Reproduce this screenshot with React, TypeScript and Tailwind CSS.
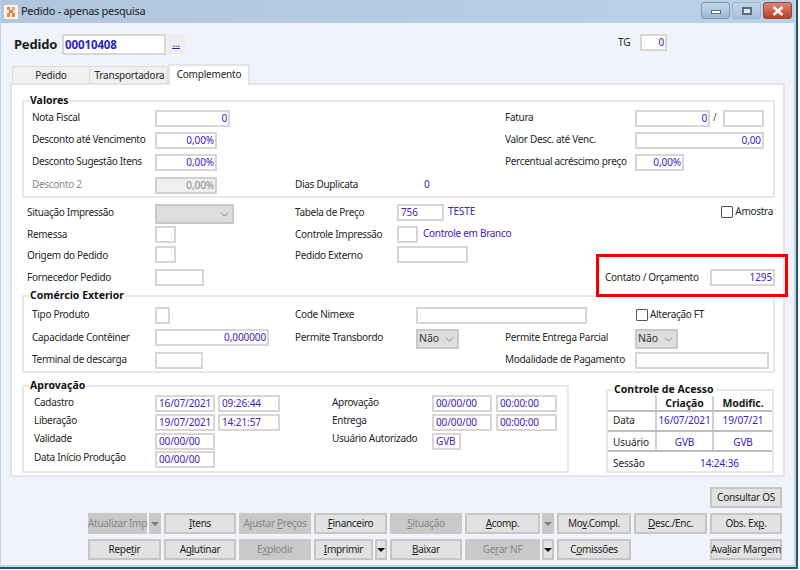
import type { ReactNode } from 'react';
import { ChevronDown } from 'lucide-react';

function Field({ w, children, disabled, left }: { w: string; children?: ReactNode; disabled?: boolean; left?: boolean }) {
  return (
    <div
      className={`${w} h-[17px] border-2 leading-[13px] whitespace-nowrap overflow-hidden ${left ? 'text-left pl-[2px]' : 'text-right pr-[1px]'} ${
        disabled ? 'bg-[#efefef] border-[#d0d0d0] text-[#888888]' : 'bg-white border-[#d6d6d6] text-[#3b22c4]'
      }`}
    >
      {children}
    </div>
  );
}

function Label({ children, disabled, className }: { children: ReactNode; disabled?: boolean; className?: string }) {
  return (
    <div className={`leading-[15px] tracking-[-0.3px] whitespace-nowrap ${disabled ? 'text-[#8a8a8a]' : 'text-[#262626]'} ${className ?? ''}`}>
      {children}
    </div>
  );
}

function Select({ w, value }: { w: string; value?: string }) {
  return (
    <div className={`${w} h-[20px] flex items-center justify-between bg-[#dedede] border-2 border-[#c8c8c8] pl-[1px] pr-[1px] text-[10.5px] text-[#333333]`}>
      <span>{value}</span>
      <ChevronDown size={13} strokeWidth={1.2} className="text-[#555555]" />
    </div>
  );
}

function Check({ children }: { children: ReactNode }) {
  return (
    <div className="flex items-center gap-[2px] tracking-[-0.3px] text-[#262626] leading-[15px]">
      <div className="w-[12px] h-[12px] bg-white border border-[#555555] rounded-[1px]" />
      <span>{children}</span>
    </div>
  );
}

function Group({ title, className, children }: { title: string; className?: string; children: ReactNode }) {
  return (
    <fieldset className={`border-2 border-[#e8e8e8] ${className ?? ''}`}>
      <legend className="ml-[5px] px-[1px] font-bold text-[10.5px] tracking-normal leading-[13px] text-[#111111]">{title}</legend>
      {children}
    </fieldset>
  );
}

function Btn({ children, disabled, className }: { children: ReactNode; disabled?: boolean; className?: string }) {
  return (
    <div
      className={`h-[21px] flex items-center justify-center border-2 tracking-[-0.3px] whitespace-nowrap ${
        disabled ? 'bg-[#c9c9c9] border-[#c9c9c9] text-[#858585]' : 'bg-[#e2e2e2] border-[#c6c6c6] text-[#222222]'
      } ${className ?? ''}`}
    >
      <span>{children}</span>
    </div>
  );
}

function Arrow({ disabled }: { disabled?: boolean }) {
  return (
    <div className={`w-[12px] h-[21px] flex items-center justify-center border-2 ${disabled ? 'bg-[#c9c9c9] border-[#c9c9c9]' : 'bg-[#e2e2e2] border-[#c6c6c6]'}`}>
      <svg width="8" height="4" viewBox="0 0 8 4">
        <polygon points="0,0 8,0 4,4" fill={disabled ? '#7d7d7d' : '#111111'} />
      </svg>
    </div>
  );
}

function AppIcon() {
  return (
    <svg width="14" height="14" viewBox="0 0 14 14">
      <rect width="14" height="14" fill="#fdf3ea" />
      <rect x="3" y="2" width="3" height="3" fill="#f08a4b" />
      <rect x="8" y="2" width="3" height="3" fill="#f4a26f" />
      <rect x="5" y="5" width="4" height="3" fill="#ee7a35" />
      <rect x="3" y="8" width="3" height="4" fill="#f08a4b" />
      <rect x="8" y="8" width="3" height="4" fill="#ef8342" />
    </svg>
  );
}

export default function App() {
  return (
    <div className="w-[798px] h-[569px] border-r-2 border-b-2 border-[#24586b] font-['Noto_Sans',sans-serif] text-[10px] tracking-[-0.1px]">
      <div className="h-full border-l border-r-2 border-b-2 border-[#bcd6f0] bg-[#f1f3fa] flex flex-col">
        {/* Title bar */}
        <div className="h-[23px] flex items-center bg-gradient-to-r from-[#b0c6dc] to-[#b9d2ea] pl-[3px] pr-[2px]">
          <AppIcon />
          <span className="ml-[3px] text-[11px] tracking-[-0.3px] text-[#1c1c1c]">Pedido - apenas pesquisa</span>
          <div className="ml-auto flex items-start gap-[2px] -mt-[2px]">
            <div className="w-[29px] h-[17px] flex items-center justify-center rounded-[3px] border border-[#7f98b2] bg-gradient-to-b from-[#c3d6e8] to-[#9db8d2]">
              <div className="w-[10px] h-[4px] mt-[3px] bg-white border border-[#5b6f84]" />
            </div>
            <div className="w-[29px] h-[17px] flex items-center justify-center rounded-[3px] border border-[#9fb6cd] bg-gradient-to-b from-[#c3d6e8] to-[#a7c0d9]">
              <div className="w-[10px] h-[8px] bg-[#dfe7ef] border-2 border-[#5b6f84]" />
            </div>
            <div className="w-[29px] h-[17px] flex items-center justify-center rounded-[3px] border border-[#8f4a3c] bg-gradient-to-b from-[#de8672] to-[#b93d28]">
              <svg width="12" height="10" viewBox="0 0 12 10">
                <path d="M1.5 1 L10.5 9 M10.5 1 L1.5 9" stroke="#ffffff" strokeWidth="2.4" />
              </svg>
            </div>
          </div>
        </div>

        {/* Pedido header */}
        <div className="mt-[11px] h-[21px] flex items-start pl-[13px]">
          <span className="w-[48px] font-bold text-[13px] tracking-[-0.2px] leading-[21px] text-[#1a1a1a]">Pedido</span>
          <div className="w-[104px] h-[21px] bg-white border-2 border-[#d6d6d6] pl-[1px] font-bold text-[11.5px] leading-[17px] text-[#2a22c0]">00010408</div>
          <div className="ml-[1px] w-[18px] h-[21px] bg-[#eeeeee] text-center leading-[19px] text-[#2a22c0] underline">...</div>
          <span className="ml-[433px] w-[22px] leading-[17px] text-[#262626]">TG</span>
          <Field w="w-[27px]">0</Field>
        </div>

        {/* Tabs */}
        <div className="mt-[9px] h-[19px] ml-[11px] flex items-end tracking-[-0.2px] text-[#262626]">
          <div className="w-[78px] h-[17px] bg-[#f0f0f0] border border-b-0 border-[#dcdcdc] text-center leading-[17px]">Pedido</div>
          <div className="w-[78px] h-[17px] pl-[2px] bg-[#f0f0f0] border-t border-r border-[#dcdcdc] text-center leading-[17px]">Transportadora</div>
          <div className="relative z-10 w-[82px] h-[21px] -mb-[2px] bg-white border-2 border-b-0 border-[#e4e4e4] text-center leading-[16px]">Complemento</div>
        </div>

        {/* Panel */}
        <div className="relative ml-[9px] w-[775px] h-[394px] bg-white border-2 border-[#e4e4e4] pt-[9px] pl-[10px] pr-[8px]">
          <Group title="Valores" className="h-[104px]">
            <div className="mt-[3px] pl-[8px] grid grid-cols-[123px_140px_210px_130px_1fr] grid-rows-[22px_22px_23px_17px] items-start">
              <Label>Nota Fiscal</Label>
              <Field w="w-[75px]">0</Field>
              <div />
              <Label>Fatura</Label>
              <div className="flex items-start">
                <Field w="w-[75px]">0</Field>
                <span className="w-[13px] pl-[3px] leading-[15px] text-[#555555]">/</span>
                <Field w="w-[41px]" />
              </div>

              <Label>Desconto até Vencimento</Label>
              <Field w="w-[62px]">0,00%</Field>
              <div />
              <Label>Valor Desc. até Venc.</Label>
              <Field w="w-[129px]">0,00</Field>

              <Label>Desconto Sugestão Itens</Label>
              <Field w="w-[62px]">0,00%</Field>
              <div />
              <Label>Percentual acréscimo preço</Label>
              <Field w="w-[49px]">0,00%</Field>

              <Label disabled>Desconto 2</Label>
              <Field w="w-[62px]" disabled>0,00%</Field>
              <div className="flex">
                <div className="w-[129px]"><Label>Dias Duplicata</Label></div>
                <span className="leading-[15px] text-[#3b22c4]">0</span>
              </div>
            </div>
          </Group>

          {/* Situação */}
          <div className="relative mt-[6px] pl-[5px] grid grid-cols-[128px_140px_102px_1fr] grid-rows-[22px_20px_23px_17px] items-start">
            <Label className="mt-[1px]">Situação Impressão</Label>
            <Select w="w-[79px]" />
            <Label className="mt-[1px]">Tabela de Preço</Label>
            <div className="flex items-start justify-between pr-[2px]">
              <div className="flex items-start">
                <Field w="w-[47px]" left>756</Field>
                <span className="ml-[4px] leading-[15px] text-[#3b22c4]">TESTE</span>
              </div>
              <Check>Amostra</Check>
            </div>

            <Label className="mt-[1px]">Remessa</Label>
            <Field w="w-[21px]" />
            <Label className="mt-[1px]">Controle Impressão</Label>
            <div className="flex items-start">
              <Field w="w-[21px]" />
              <span className="ml-[5px] leading-[15px] tracking-[-0.3px] text-[#3b22c4]">Controle em Branco</span>
            </div>

            <Label className="mt-[2px]">Origem do Pedido</Label>
            <Field w="w-[21px]" />
            <Label className="mt-[2px]">Pedido Externo</Label>
            <Field w="w-[71px]" />

            <Label className="mt-[1px]">Fornecedor Pedido</Label>
            <Field w="w-[49px]" />
            <div />
            <div className="flex items-start pl-[208px]">
              <div className="w-[105px]"><Label className="mt-[1px]">Contato / Orçamento</Label></div>
              <Field w="w-[65px]">1295</Field>
            </div>

            {/* Destaque vermelho */}
            <div className="absolute left-[574px] top-[50px] w-[192px] h-[43px] border-[3px] border-[#f00000] z-20" />
          </div>

          <Group title="Comércio Exterior" className="mt-[3px] h-[84px]">
            <div className="mt-[5px] pl-[8px] grid grid-cols-[123px_140px_121px_89px_130px_1fr] grid-rows-[22px_23px_17px] items-start">
              <Label>Tipo Produto</Label>
              <Field w="w-[15px]" />
              <Label>Code Nimexe</Label>
              <div className="col-span-2"><Field w="w-[171px]" /></div>
              <div className="col-start-6 ml-[1px]"><Check>Alteração FT</Check></div>

              <Label className="mt-[1px]">Capacidade Contêiner</Label>
              <Field w="w-[114px]">0,000000</Field>
              <Label className="mt-[1px]">Permite Transbordo</Label>
              <Select w="w-[43px]" value="Não" />
              <Label className="mt-[1px]">Permite Entrega Parcial</Label>
              <Select w="w-[43px]" value="Não" />

              <Label>Terminal de descarga</Label>
              <Field w="w-[48px]" />
              <div />
              <div />
              <Label>Modalidade de Pagamento</Label>
              <Field w="w-[134px]" />
            </div>
          </Group>

          <div className="mt-[6px] flex items-end">
            <Group title="Aprovação" className="w-[547px] h-[94px]">
              <div className="mt-[3px] pl-[10px] grid grid-cols-[121px_63px_114px_100px_64px_1fr] grid-rows-[19px_19px_18px_17px] items-start">
                <Label>Cadastro</Label>
                <Field w="w-[60px]" left>16/07/2021</Field>
                <Field w="w-[62px]" left>09:26:44</Field>
                <Label>Aprovação</Label>
                <Field w="w-[60px]" left>00/00/00</Field>
                <Field w="w-[61px]" left>00:00:00</Field>

                <Label className="-mt-[1px]">Liberação</Label>
                <Field w="w-[60px]" left>19/07/2021</Field>
                <Field w="w-[62px]" left>14:21:57</Field>
                <Label className="-mt-[1px]">Entrega</Label>
                <Field w="w-[60px]" left>00/00/00</Field>
                <Field w="w-[61px]" left>00:00:00</Field>

                <Label className="-mt-[2px]">Validade</Label>
                <Field w="w-[60px]" left>00/00/00</Field>
                <div />
                <Label className="-mt-[2px]">Usuário Autorizado</Label>
                <Field w="w-[29px]" left>GVB</Field>
                <div />

                <Label className="-mt-[1px]">Data Início Produção</Label>
                <Field w="w-[60px]" left>00/00/00</Field>
              </div>
            </Group>

            <Group title="Controle de Acesso" className="ml-[37px] w-[168px] h-[90px]">
              <div className="flex h-[16px] border-b-2 border-[#bdbdbd] font-bold text-[10.5px] text-[#1a1a1a]">
                <div className="w-[49px] border-r-2 border-[#d0d0d0]" />
                <div className="w-[57px] border-r-2 border-[#d0d0d0] text-center leading-[14px]">Criação</div>
                <div className="flex-1 text-center leading-[14px]">Modific.</div>
              </div>
              <div className="flex h-[20px] border-b-2 border-[#bdbdbd] leading-[16px] text-[#3b22c4]">
                <div className="w-[49px] pl-[5px] border-r-2 border-[#d0d0d0] text-[#262626]">Data</div>
                <div className="w-[57px] border-r-2 border-[#d0d0d0] text-center">16/07/2021</div>
                <div className="flex-1 text-center">19/07/21</div>
              </div>
              <div className="flex h-[20px] border-b-2 border-[#bdbdbd] leading-[20px] text-[#3b22c4]">
                <div className="w-[49px] pl-[5px] border-r-2 border-[#d0d0d0] text-[#262626]">Usuário</div>
                <div className="w-[57px] border-r-2 border-[#d0d0d0] text-center">GVB</div>
                <div className="flex-1 text-center">GVB</div>
              </div>
              <div className="flex h-[20px] leading-[22px] text-[#3b22c4]">
                <div className="w-[49px] pl-[5px] text-[#262626]">Sessão</div>
                <div className="flex-1 pl-[20px] text-center pr-[10px]">14:24:36</div>
              </div>
            </Group>
          </div>
        </div>

        {/* Buttons */}
        <div className="mt-[10px] ml-[87px] grid grid-cols-[73px_72px_72px_73px_72px_89px_74px_73px_72px] grid-rows-[21px_21px_21px] gap-x-[3px] gap-y-[5px]">
          <Btn className="col-start-9">Consultar OS</Btn>

          <div className="col-start-1 flex justify-between">
            <Btn disabled className="w-[59px]">Atualizar Imp</Btn>
            <Arrow disabled />
          </div>
          <Btn><u>I</u>tens</Btn>
          <Btn disabled>Ajustar <u>P</u>reços</Btn>
          <Btn><u>F</u>inanceiro</Btn>
          <Btn disabled><u>S</u>ituação</Btn>
          <div className="flex gap-[2px]">
            <Btn className="flex-1"><u>A</u>comp.</Btn>
            <Arrow disabled />
          </div>
          <Btn>Mo<u>v</u>.Compl.</Btn>
          <Btn><u>D</u>esc./Enc.</Btn>
          <Btn>Obs. Ex<u>p</u>.</Btn>

          <Btn>Repe<u>t</u>ir</Btn>
          <Btn>Ag<u>l</u>utinar</Btn>
          <Btn disabled>E<u>x</u>plodir</Btn>
          <div className="flex gap-[2px]">
            <Btn className="flex-1"><u>I</u>mprimir</Btn>
            <Arrow />
          </div>
          <Btn><u>B</u>aixar</Btn>
          <div className="flex gap-[2px]">
            <Btn disabled className="flex-1">Ge<u>r</u>ar NF</Btn>
            <Arrow />
          </div>
          <Btn>C<u>o</u>missões</Btn>
          <div />
          <Btn>Ava<u>l</u>iar Margem</Btn>
        </div>
      </div>
    </div>
  );
}
